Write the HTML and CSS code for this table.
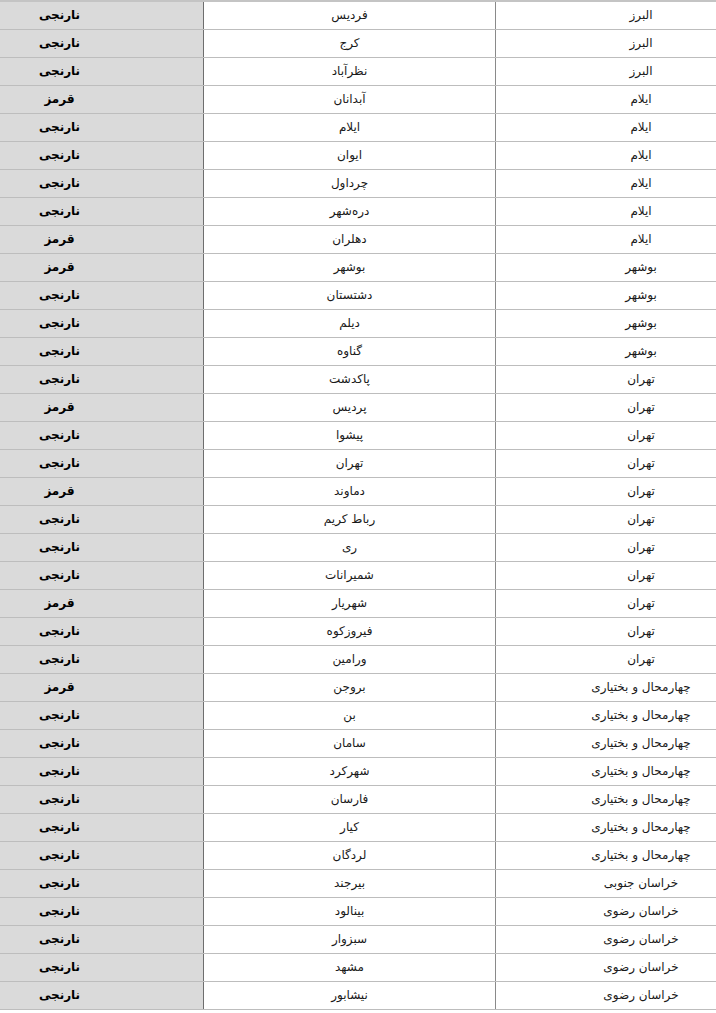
FILE: index.html
```html
<!DOCTYPE html>
<html lang="fa">
<head>
<meta charset="utf-8">
<link rel="stylesheet" href="styles.css">
</head>
<body>
<div class="sheet">
<div class="row"><div class="c prov">البرز</div><div class="c city">فردیس</div><div class="c stat">نارنجی</div></div>
<div class="row"><div class="c prov">البرز</div><div class="c city">کرج</div><div class="c stat">نارنجی</div></div>
<div class="row"><div class="c prov">البرز</div><div class="c city">نظرآباد</div><div class="c stat">نارنجی</div></div>
<div class="row"><div class="c prov">ایلام</div><div class="c city">آبدانان</div><div class="c stat">قرمز</div></div>
<div class="row"><div class="c prov">ایلام</div><div class="c city">ایلام</div><div class="c stat">نارنجی</div></div>
<div class="row"><div class="c prov">ایلام</div><div class="c city">ایوان</div><div class="c stat">نارنجی</div></div>
<div class="row"><div class="c prov">ایلام</div><div class="c city">چرداول</div><div class="c stat">نارنجی</div></div>
<div class="row"><div class="c prov">ایلام</div><div class="c city">دره‌شهر</div><div class="c stat">نارنجی</div></div>
<div class="row"><div class="c prov">ایلام</div><div class="c city">دهلران</div><div class="c stat">قرمز</div></div>
<div class="row"><div class="c prov">بوشهر</div><div class="c city">بوشهر</div><div class="c stat">قرمز</div></div>
<div class="row"><div class="c prov">بوشهر</div><div class="c city">دشتستان</div><div class="c stat">نارنجی</div></div>
<div class="row"><div class="c prov">بوشهر</div><div class="c city">دیلم</div><div class="c stat">نارنجی</div></div>
<div class="row"><div class="c prov">بوشهر</div><div class="c city">گناوه</div><div class="c stat">نارنجی</div></div>
<div class="row"><div class="c prov">تهران</div><div class="c city">پاکدشت</div><div class="c stat">نارنجی</div></div>
<div class="row"><div class="c prov">تهران</div><div class="c city">پردیس</div><div class="c stat">قرمز</div></div>
<div class="row"><div class="c prov">تهران</div><div class="c city">پیشوا</div><div class="c stat">نارنجی</div></div>
<div class="row"><div class="c prov">تهران</div><div class="c city">تهران</div><div class="c stat">نارنجی</div></div>
<div class="row"><div class="c prov">تهران</div><div class="c city">دماوند</div><div class="c stat">قرمز</div></div>
<div class="row"><div class="c prov">تهران</div><div class="c city">رباط کریم</div><div class="c stat">نارنجی</div></div>
<div class="row"><div class="c prov">تهران</div><div class="c city">ری</div><div class="c stat">نارنجی</div></div>
<div class="row"><div class="c prov">تهران</div><div class="c city">شمیرانات</div><div class="c stat">نارنجی</div></div>
<div class="row"><div class="c prov">تهران</div><div class="c city">شهریار</div><div class="c stat">قرمز</div></div>
<div class="row"><div class="c prov">تهران</div><div class="c city">فیروزکوه</div><div class="c stat">نارنجی</div></div>
<div class="row"><div class="c prov">تهران</div><div class="c city">ورامین</div><div class="c stat">نارنجی</div></div>
<div class="row"><div class="c prov">چهارمحال و بختیاری</div><div class="c city">بروجن</div><div class="c stat">قرمز</div></div>
<div class="row"><div class="c prov">چهارمحال و بختیاری</div><div class="c city">بن</div><div class="c stat">نارنجی</div></div>
<div class="row"><div class="c prov">چهارمحال و بختیاری</div><div class="c city">سامان</div><div class="c stat">نارنجی</div></div>
<div class="row"><div class="c prov">چهارمحال و بختیاری</div><div class="c city">شهرکرد</div><div class="c stat">نارنجی</div></div>
<div class="row"><div class="c prov">چهارمحال و بختیاری</div><div class="c city">فارسان</div><div class="c stat">نارنجی</div></div>
<div class="row"><div class="c prov">چهارمحال و بختیاری</div><div class="c city">کیار</div><div class="c stat">نارنجی</div></div>
<div class="row"><div class="c prov">چهارمحال و بختیاری</div><div class="c city">لردگان</div><div class="c stat">نارنجی</div></div>
<div class="row"><div class="c prov">خراسان جنوبی</div><div class="c city">بیرجند</div><div class="c stat">نارنجی</div></div>
<div class="row"><div class="c prov">خراسان رضوی</div><div class="c city">بینالود</div><div class="c stat">نارنجی</div></div>
<div class="row"><div class="c prov">خراسان رضوی</div><div class="c city">سبزوار</div><div class="c stat">نارنجی</div></div>
<div class="row"><div class="c prov">خراسان رضوی</div><div class="c city">مشهد</div><div class="c stat">نارنجی</div></div>
<div class="row"><div class="c prov">خراسان رضوی</div><div class="c city">نیشابور</div><div class="c stat">نارنجی</div></div>
</div>
</body>
</html>
```

FILE: styles.css
```css
html, body {
  margin: 0;
  padding: 0;
  background: #ffffff;
  overflow: hidden;
}
body {
  width: 716px;
  height: 1013px;
}
.sheet {
  direction: rtl;
  width: 870px;
  margin-left: -84px;
  border-top: 2px solid #c4c4c4;
  font-family: "DejaVu Sans", "Noto Sans", sans-serif;
  font-size: 12px;
  color: #1a1a1a;
}
.row {
  display: grid;
  grid-template-columns: 290px 292px 288px;
  height: 28px;
  border-bottom: 1px solid #bdbdbd;
  box-sizing: border-box;
}
.c {
  display: flex;
  align-items: center;
  justify-content: center;
  line-height: 1;
  padding-bottom: 1px;
}
.city {
  border-right: 1px solid #8a8a8a;
}
.stat {
  background: #dadada;
  border-right: 1px solid #6e6e6e;
  font-weight: bold;
  color: #000;
}
```
